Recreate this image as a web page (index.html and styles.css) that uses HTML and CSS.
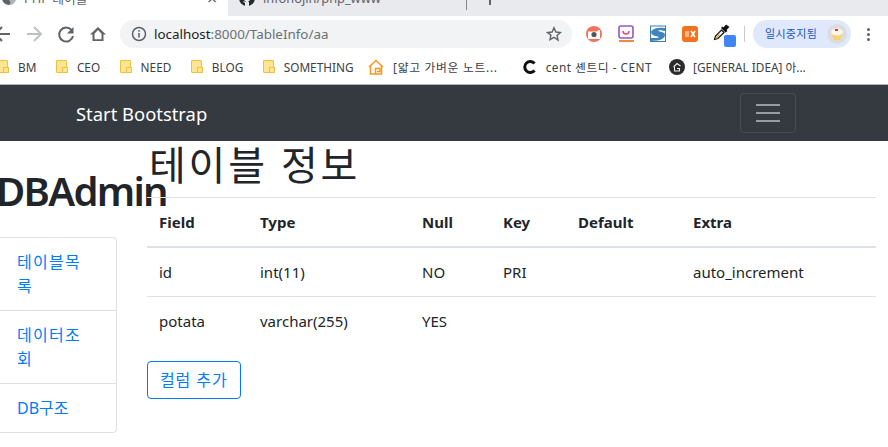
FILE: index.html
```html
<!DOCTYPE html>
<html lang="ko">
<head>
	<meta charset="utf-8">
	<title>테이블 정보</title>
	<link rel="stylesheet" href="styles.css">
</head>
<body>
	<div class="tabstrip">
		<div class="tab tab-active">
			<svg class="tab-favicon" width="14" height="14" viewBox="0 0 16 16"><circle cx="8" cy="8" r="8" fill="#5f6368"/><path d="M8 0a8 8 0 0 1 0 16c2-2 2-3 0-6S5 6 8 0z" fill="#fff" opacity=".5"/></svg>
			<span class="tab-title">PHP 테이블</span>
			<span class="tab-close">×</span>
		</div>
		<div class="tab tab-other">
			<svg class="tab-favicon" width="16" height="16" viewBox="0 0 16 16"><circle cx="8" cy="8" r="8" fill="#24292e"/><path d="M6 16v-3l-2-1 1-1 1 1h1l-2-2V7l1-2 1 1h2l1-1 1 2v3l-2 2h1v4z" fill="#e8eaed"/></svg>
			<span class="tab-title">infonojin/php_www</span>
		</div>
		<div class="tab-divider"></div>
		<div class="tab-plus"></div>
	</div>

	<div class="toolbar">
		<div class="nav-icons">
			<svg width="32" height="20" viewBox="0 0 32 20"><path d="M24 10H10M16 3l-7 7 7 7" fill="none" stroke="#5f6368" stroke-width="2"/></svg>
			<svg width="32" height="20" viewBox="0 0 32 20"><path d="M9 10h14M16 3l7 7-7 7" fill="none" stroke="#bdc1c6" stroke-width="2"/></svg>
			<svg width="32" height="20" viewBox="0 0 32 20"><path d="M21.500 6A7 7 0 1 0 23 12" fill="none" stroke="#5f6368" stroke-width="2"/><path d="M23.500 3v6.500H17z" fill="#5f6368"/></svg>
			<svg width="32" height="20" viewBox="0 0 32 20"><path d="M16 3l-8 7.500h2.500V17h11v-6.500H24zM12.500 15.200v-5.500L16 6l3.500 3.700v5.500z" fill="#5f6368"/></svg>
		</div>
		<div class="omnibox">
			<svg width="16" height="16" viewBox="0 0 16 16"><circle cx="8" cy="8" r="6.500" fill="none" stroke="#5f6368" stroke-width="1.500"/><path d="M8 7v4.500M8 4.200v1.600" stroke="#5f6368" stroke-width="1.600"/></svg>
			<span class="url"><b class="url-host">localhost</b>:8000/TableInfo/aa</span>
			<svg class="star" width="16" height="16" viewBox="0 0 16 16"><path d="M8 1.800l1.900 4.200 4.600.5-3.400 3.100.9 4.500L8 11.300l-4 2.300.9-4.500L1.500 6.500 6.100 6z" fill="none" stroke="#5f6368" stroke-width="1.400"/></svg>
		</div>
		<div class="ext-icons">
			<svg width="32" height="18" viewBox="0 0 32 18"><circle cx="16" cy="9" r="8" fill="#f4725c"/><path d="M10 6.500h9l1-1.500h2v9H10z" fill="#fff"/><circle cx="16" cy="9.500" r="2.600" fill="#555"/></svg>
			<svg width="32" height="18" viewBox="0 0 32 18"><rect x="9" y="1" width="14" height="12" rx="2" fill="#fff" stroke="#8e5bc4" stroke-width="1.600"/><path d="M13 6c0 4 6 4 6 0" fill="none" stroke="#e8457c" stroke-width="1.500"/><rect x="9" y="15" width="15" height="2" fill="#f08a3c"/></svg>
			<svg width="32" height="18" viewBox="0 0 32 18"><rect x="8.500" y="1" width="15" height="15.500" fill="#fff" stroke="#3d7fb5"/><path d="M9 7c1-4 9-5 14-4v3c-4-1-7-1-7 0 3 1 7 1 7 4 0 3-4 6-14 6v-3c4 0 8 0 8-1-2-1-8-1-8-5z" fill="#3d85bb"/></svg>
			<svg width="32" height="18" viewBox="0 0 32 18"><rect x="8" y="1" width="16" height="16" rx="3" fill="#f3711f"/><rect x="11" y="6" width="4" height="6" fill="#f9b78a"/><path d="M17 6l4 6M21 6l-4 6" stroke="#fff" stroke-width="1.600"/></svg>
			<span class="dropper">
				<svg width="18" height="18" viewBox="0 0 18 18"><path d="M1.500 16.500l1-3.500 6-6 2.500 2.500-6 6z" fill="#fff" stroke="#111" stroke-width="1.200"/><path d="M3 15l3.500-3.500" stroke="#e5a23c" stroke-width="1.500"/><path d="M8 5l1.500-1.500 1 1 2.500-3 3.500 2.500-3 3 1 1L12.500 9.500z" fill="#111"/></svg>
				<span class="dropper-badge"></span>
			</span>
		</div>
		<div class="toolbar-sep"></div>
		<div class="profile">
			<span>일시중지됨</span>
			<svg class="avatar" width="20" height="20" viewBox="0 0 20 20"><circle cx="10" cy="10" r="10" fill="#dcdcdc"/><path d="M5 10h10l-2 6H7z" fill="#f6d36b"/><ellipse cx="10" cy="8" rx="6" ry="3.500" fill="#fdf6ea"/><rect x="8" y="5" width="3" height="2" fill="#d9344a"/></svg>
		</div>
		<div class="menu-dots"><i></i><i></i><i></i></div>
	</div>

	<div class="bookmarks">
		<span class="bm bm-cut"><i class="folder"></i>BM</span>
		<span class="bm"><i class="folder"></i>CEO</span>
		<span class="bm"><i class="folder"></i>NEED</span>
		<span class="bm"><i class="folder"></i>BLOG</span>
		<span class="bm"><i class="folder"></i>SOMETHING</span>
		<span class="bm bm-home">
			<svg width="16" height="16" viewBox="0 0 16 16"><path d="M1 8l7-6.500L15 8M2.500 7v8h11V7" fill="none" stroke="#f7981d" stroke-width="1.500"/><path d="M7.500 15V9.500h4.500v3H9" fill="none" stroke="#f7981d" stroke-width="1.500"/></svg>[얇고 가벼운 노트...</span>
		<span class="bm bm-cent">
			<svg width="14" height="14" viewBox="0 0 14 14"><path d="M11.500 3.500a5.500 5.500 0 1 0 0 7" fill="none" stroke="#111" stroke-width="3"/></svg>cent 셴트디 - CENT</span>
		<span class="bm bm-idea">
			<svg width="16" height="16" viewBox="0 0 16 16"><circle cx="8" cy="8" r="8" fill="#2b2b2b"/><path d="M4.500 8L8 4.500 11.500 7M5.500 8v4h5V9.500H8" fill="none" stroke="#eee" stroke-width="1.100"/></svg>[GENERAL IDEA] 아...</span>
	</div>

	<nav class="navbar">
		<a class="brand">Start Bootstrap</a>
		<button class="toggler"><i></i><i></i><i></i></button>
	</nav>

	<div class="page">
		<div class="sidebar">
			<h2 class="side-title">DBAdmin</h2>
			<div class="list-group">
				<a class="list-item">테이블목록</a>
				<a class="list-item">데이터조회</a>
				<a class="list-item list-item-short">DB구조</a>
			</div>
		</div>
		<div class="content">
			<h1 class="page-title">테이블 정보</h1>
			<table class="info-table">
				<colgroup>
					<col class="c-field"><col class="c-type"><col class="c-null"><col class="c-key"><col class="c-default"><col>
				</colgroup>
				<thead>
					<tr><th>Field</th><th>Type</th><th>Null</th><th>Key</th><th>Default</th><th>Extra</th></tr>
				</thead>
				<tbody>
					<tr><td>id</td><td>int(11)</td><td>NO</td><td>PRI</td><td></td><td>auto_increment</td></tr>
					<tr class="row-last"><td>potata</td><td>varchar(255)</td><td>YES</td><td></td><td></td><td></td></tr>
				</tbody>
			</table>
			<a class="btn-add">컬럼 추가</a>
		</div>
	</div>
</body>
</html>
```

FILE: styles.css
```css
*{
	box-sizing:border-box;
}
html,body{
	height:100%;
}
body{
	margin:0;
	overflow:hidden;
	background-color:white;
	color:#212529;
	font-family:"Noto Sans","Noto Sans CJK KR",sans-serif;
	font-size:16px;
	line-height:24px;
}

/* browser tabs */
.tabstrip{
	display:flex;
	height:16px;
	overflow:hidden;
	background-color:#e8eaed;
	color:#5f6368;
	font-size:12.800px;
}
.tab{
	display:flex;
	align-items:center;
	height:16px;
}
.tab-active{
	width:228px;
	padding-left:2px;
	background-color:white;
}
.tab-other{
	width:238px;
	padding-left:11px;
	background-color:#e8eaed;
	border-bottom-left-radius:8px;
}
.tab-favicon{
	flex:none;
	margin-top:-20px;
}
.tab-other .tab-favicon{
	margin-top:-21px;
}
.tab-title{
	margin-top:-20px;
	white-space:nowrap;
}
.tab-active .tab-title{
	flex:1;
	margin-left:8px;
}
.tab-other .tab-title{
	margin-left:8px;
}
.tab-close{
	width:21px;
	margin-top:-21px;
	font-size:18px;
}
.tab-divider{
	width:1px;
	height:10px;
	background-color:#80868b;
}
.tab-plus{
	width:2px;
	height:5px;
	margin-left:22px;
	background-color:#5f6368;
}

/* browser toolbar */
.toolbar{
	display:flex;
	align-items:center;
	height:34px;
	padding-top:2px;
	background-color:white;
}
.nav-icons{
	display:flex;
	flex:none;
	margin-left:-14px;
	margin-right:6px;
}
.omnibox{
	display:flex;
	align-items:center;
	flex:none;
	width:452px;
	height:28px;
	padding:0 10px 0 11px;
	background-color:#f1f3f4;
	border-radius:14px;
}
.url{
	flex:1;
	margin-left:7px;
	color:#6a7077;
	font-size:13.400px;
	white-space:nowrap;
}
.url-host{
	color:#202124;
	font-weight:normal;
}
.ext-icons{
	display:flex;
	align-items:center;
	flex:none;
	margin-left:6px;
}
.dropper{
	position:relative;
	display:block;
	width:32px;
	height:20px;
	padding-left:7px;
}
.dropper svg{
	display:block;
	margin-top:-1px;
}
.dropper-badge{
	position:absolute;
	left:18px;
	top:11px;
	width:12px;
	height:12px;
	background-color:#4285f4;
	border-radius:2px;
}
.toolbar-sep{
	width:1px;
	height:16px;
	margin-left:6px;
	background-color:#c8cacd;
}
.profile{
	display:flex;
	align-items:center;
	justify-content:space-between;
	flex:none;
	width:98px;
	height:28px;
	margin-left:8px;
	padding:0 4px 0 12px;
	background-color:#dfe9fb;
	border-radius:14px;
	color:#1a56c4;
	font-size:11px;
	letter-spacing:.3px;
}
.menu-dots{
	display:flex;
	flex-direction:column;
	gap:2px;
	margin-left:16px;
}
.menu-dots i{
	display:block;
	width:3px;
	height:3px;
	background-color:#5f6368;
	border-radius:50%;
}

/* bookmarks */
.bookmarks{
	display:flex;
	align-items:center;
	height:35px;
	padding-bottom:1px;
	background-color:white;
	border-bottom:1px solid #b5b6b8;
	color:#3c4043;
	font-size:11.800px;
	white-space:nowrap;
}
.bm{
	display:flex;
	align-items:center;
	margin-right:19.500px;
}
.bm-cut{
	margin-left:-3px;
}
.folder{
	position:relative;
	display:block;
	flex:none;
	width:11px;
	height:13px;
	margin-right:10px;
	background-color:#fde593;
	border:1px solid #eec23e;
	border-radius:1px;
}
.folder::after{
	content:"";
	position:absolute;
	right:-2px;
	bottom:-1px;
	width:4px;
	height:4px;
	background-color:#fde593;
	border:1px solid #eec23e;
}
.bm-home{
	margin-left:-5px;
	margin-right:25px;
	letter-spacing:.7px;
}
.bm-home svg{
	margin-right:9px;
}
.bm-cent{
	margin-right:17px;
	letter-spacing:.5px;
}
.bm-cent svg{
	margin-right:9px;
}
.bm-idea svg{
	margin-right:8px;
}

/* site navbar */
.navbar{
	display:flex;
	align-items:center;
	justify-content:space-between;
	height:56px;
	padding:0 92px 0 76px;
	background-color:#343a40;
}
.brand{
	margin-top:1px;
	color:white;
	font-size:18.400px;
}
.toggler{
	display:flex;
	flex-direction:column;
	justify-content:center;
	gap:6px;
	width:56px;
	height:40px;
	padding:0 15px;
	background:none;
	border:1px solid #474c52;
	border-radius:4px;
}
.toggler i{
	display:block;
	height:2px;
	background-color:#9a9da0;
}

/* page */
.page{
	display:flex;
}
.sidebar{
	flex:none;
	width:121px;
	margin-left:-4px;
	margin-right:30px;
	padding-top:26px;
}
.side-title{
	margin:0 0 22px 0;
	font-size:40px;
	line-height:48px;
	font-weight:600;
	letter-spacing:-1.700px;
	white-space:nowrap;
}
.list-group{
	border:1px solid #dfdfdf;
	border-radius:4px;
}
.list-item{
	display:block;
	padding:12px 20px;
	color:#007bff;
	letter-spacing:1.300px;
	border-bottom:1px solid #dfdfdf;
}
.list-item-short{
	letter-spacing:0;
	border-bottom:none;
}
.content{
	width:729px;
}
.page-title{
	margin:0 0 8px 2px;
	font-size:40px;
	line-height:48px;
	font-weight:normal;
	letter-spacing:2.800px;
}
.info-table{
	width:100%;
	margin-bottom:16px;
	border-collapse:collapse;
	table-layout:fixed;
}
.c-field{
	width:101px;
}
.c-type{
	width:162px;
}
.c-null{
	width:81px;
}
.c-key{
	width:75px;
}
.c-default{
	width:115px;
}
.info-table th{
	padding:12px;
	text-align:left;
	font-size:15px;
	border-top:1px solid #dee2e6;
	border-bottom:2px solid #dee2e6;
}
.info-table td{
	height:49px;
	padding:12px;
	font-size:15px;
	border-bottom:1px solid #dee2e6;
}
.info-table .row-last td{
	height:48px;
	border-bottom:none;
}
.btn-add{
	display:inline-block;
	height:38px;
	padding:6px 12px;
	color:#007bff;
	letter-spacing:.9px;
	border:1px solid #007bff;
	border-radius:4px;
}
```
